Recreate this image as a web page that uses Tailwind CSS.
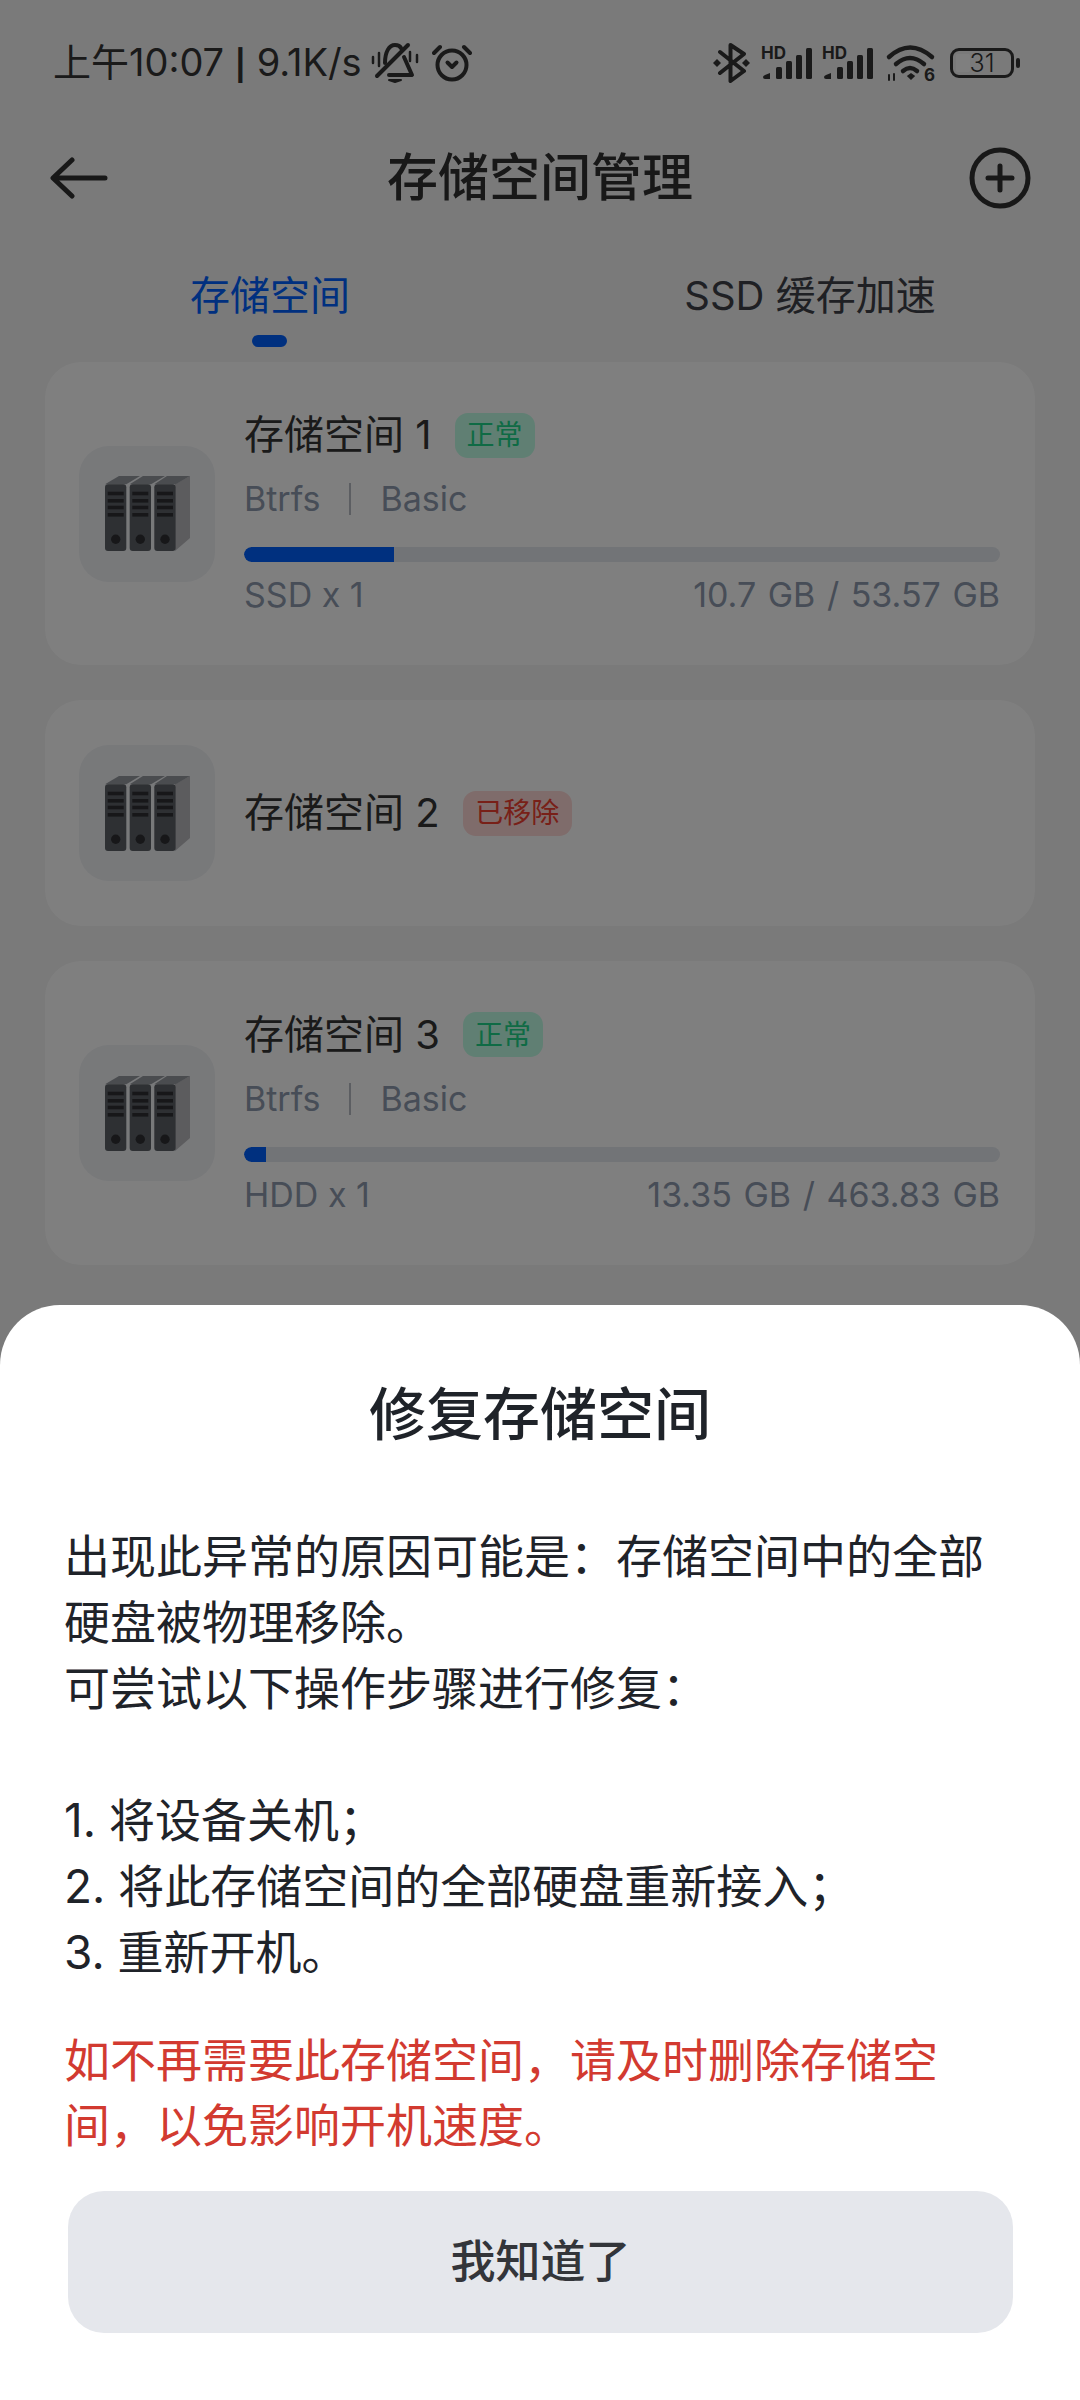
<!DOCTYPE html>
<html lang="zh-CN">
<head>
    <meta charset="UTF-8">
    <meta name="viewport" content="width=device-width, initial-scale=1.0">
    <title>存储空间管理</title>
    <script src="https://cdn.jsdelivr.net/npm/@tailwindcss/browser@4"></script>
</head>
<body class="relative w-[1080px] h-[2400px] overflow-hidden bg-[#f4f4f4] font-['Inter','Noto_Sans_CJK_SC',sans-serif] text-[#343434]">

    <!-- Status bar -->
    <div class="flex items-center h-[40px] mt-[43px] pl-[53px] pr-[60px]">
        <span class="text-[38px] leading-[40px] whitespace-nowrap">上午10:07 <span class="text-[30px] font-bold">|</span> 9.1K/s</span>
        <svg class="ml-[10px] overflow-visible" width="46" height="40" viewBox="0 0 46 40" fill="none" stroke="#343434" stroke-width="4" stroke-linecap="round" stroke-linejoin="round">
            <path d="M13 20c0-11 4-18 10-18 3 0 5 1 6 3M32 14l8 18H17"/>
            <path d="M36 2 5 33"/><path d="M17 37h12l-6 2z" stroke-width="2" fill="#343434"/>
            <path d="M1 14v6M7 10v13M38 9v9M45 12v7" stroke-width="2.500"/>
        </svg>
        <svg class="ml-[14px]" width="40" height="38" viewBox="0 0 40 38" fill="none" stroke="#343434" stroke-width="4" stroke-linecap="round" stroke-linejoin="round">
            <circle cx="20" cy="21" r="14.500"/><path d="M15.500 18.500 20 23l4.500-4.500"/><path d="M2 9l6-6M38 9l-6-6"/>
        </svg>
        <div class="ml-auto flex items-center">
            <svg width="37" height="40" viewBox="0 0 37 40" fill="none" stroke="#343434" stroke-width="4" stroke-linejoin="round" stroke-linecap="round">
                <path d="M7 9 31 28 17.500 38V2L31 11 7 30"/>
                <path d="M4 16l4 4-4 4-4-4zM33 16l4 4-4 4-4-4z" fill="#343434" stroke="none"/>
            </svg>
            <svg class="ml-[11px] overflow-visible" width="52" height="34" viewBox="0 0 52 34" fill="#343434">
                <text x="0" y="12.500" font-size="17" font-weight="700" font-family="Inter">HD</text>
                <path d="M9 27v6H4q-2 0-2-2 0-1 2-2z"/><rect x="15" y="21" width="6" height="12" rx="1.500"/><rect x="25" y="15" width="6" height="18" rx="1.500"/><rect x="35" y="9" width="6" height="24" rx="1.500"/><rect x="45" y="2" width="6" height="31" rx="1.500"/>
            </svg>
            <svg class="ml-[9px] overflow-visible" width="52" height="34" viewBox="0 0 52 34" fill="#343434">
                <text x="0" y="12.500" font-size="17" font-weight="700" font-family="Inter">HD</text>
                <path d="M9 27v6H4q-2 0-2-2 0-1 2-2z"/><rect x="15" y="21" width="6" height="12" rx="1.500"/><rect x="25" y="15" width="6" height="18" rx="1.500"/><rect x="35" y="9" width="6" height="24" rx="1.500"/><rect x="45" y="2" width="6" height="31" rx="1.500"/>
            </svg>
            <svg class="ml-[12px] overflow-visible" width="50" height="38" viewBox="0 0 50 38" fill="none" stroke="#343434" stroke-width="4.500" stroke-linecap="round">
                <path d="M3 13Q24-6 46 13"/><path d="M10 20Q24 8 38 20"/><path d="M17 27Q24 21 31 27"/>
                <path d="M22 32l3-2 3 2-3 3z" fill="#343434" stroke-width="1.500"/>
                <path d="M3 31v5M8 30v6" stroke-width="2"/>
                <text x="38" y="37" font-size="17" font-weight="700" font-family="Inter" fill="#343434" stroke="none">6</text>
            </svg>
            <div class="relative ml-[14px] w-[64px] h-[30px] rounded-[9px] border-[3px] border-[#343434] flex items-center justify-center">
                <div class="absolute left-[3px] top-[3px] bottom-[3px] w-[14px] rounded-[2px] bg-white"></div>
                <span class="relative text-[25px] leading-none font-light">31</span>
            </div>
            <div class="ml-[2px] w-[4px] h-[10px] rounded-full bg-[#343434]"></div>
        </div>
    </div>

    <!-- Header -->
    <div class="relative flex items-center justify-between h-[64px] mt-[63px] pl-[50px] pr-[49px]">
        <svg width="58" height="42" viewBox="0 0 58 42" fill="none" stroke="#303030" stroke-width="5" stroke-linecap="round" stroke-linejoin="round">
            <path d="M55 21H4M22 3 3 21l19 18"/>
        </svg>
        <h1 class="absolute left-0 right-0 text-center text-[51px] leading-[64px] font-medium text-[#303030]">存储空间管理</h1>
        <svg width="62" height="62" viewBox="0 0 62 62" fill="none" stroke="#303030" stroke-width="5" stroke-linecap="round">
            <circle cx="31" cy="31" r="28"/><path d="M31 19v24M19 31h24"/>
        </svg>
    </div>

    <!-- Tabs -->
    <div class="flex mt-[58px] h-[67px]">
        <div class="relative w-[540px] text-center text-[40px] leading-[56px] text-[#0060ff]">存储空间
            <div class="absolute left-[252px] top-[67px] w-[35px] h-[12px] rounded-full bg-[#0060ff]"></div>
        </div>
        <div class="w-[540px] text-center text-[40px] leading-[56px] text-[#3e4148]">SSD 缓存加速</div>
    </div>

    <!-- Cards -->
    <div class="flex flex-col gap-[35px] mx-[45px] mt-[27px]">
        <div class="flex items-center h-[303px] pl-[34px] pr-[35px] rounded-[36px] bg-white">
            <div class="flex-none flex items-center justify-center w-[136px] h-[136px] rounded-[30px] bg-[#f0f2f5]">
                <svg width="85" height="75" viewBox="0 0 85 75">
                    <path d="M70 8.300 85 0v62L70 75z" fill="#b8b8bc"/>
                    <g fill="#94989e"><path d="M0 8.300 14 0h21L21.300 8.300z"/><path d="M24.700 8.300 38 0h22L46 8.300z"/><path d="M49.300 8.300 62 0h23L70.700 8.300z"/></g>
                    <g fill="#5c6066"><rect x="0" y="8.300" width="21.300" height="66.700" rx="3"/><rect x="24.700" y="8.300" width="21.300" height="66.700" rx="3"/><rect x="49.300" y="8.300" width="21.300" height="66.700" rx="3"/></g>
                    <g fill="#2e2f33"><rect x="2.700" y="15.700" width="16" height="3.600"/><rect x="2.700" y="23" width="16" height="3.600"/><rect x="2.700" y="29.700" width="16" height="3.600"/><rect x="2.700" y="37" width="16" height="3.600"/><rect x="27.300" y="15.700" width="16" height="3.600"/><rect x="27.300" y="23" width="16" height="3.600"/><rect x="27.300" y="29.700" width="16" height="3.600"/><rect x="27.300" y="37" width="16" height="3.600"/><rect x="52" y="15.700" width="16" height="3.600"/><rect x="52" y="23" width="16" height="3.600"/><rect x="52" y="29.700" width="16" height="3.600"/><rect x="52" y="37" width="16" height="3.600"/><circle cx="10.700" cy="63.300" r="4.700"/><circle cx="35.300" cy="63.300" r="4.700"/><circle cx="60" cy="63.300" r="4.700"/></g>
                </svg>
            </div>
            <div class="flex-1 ml-[29px] pb-[2px]">
                <div class="flex items-center h-[46px]">
                    <span class="text-[40px] leading-[46px]">存储空间 1</span>
                    <span class="ml-[23px] flex items-center justify-center w-[80px] h-[45px] rounded-[13px] bg-[#c0ffe6] text-[28px] text-[#1ed68a]">正常</span>
                </div>
                <div class="flex items-center mt-[23px] h-[36px] text-[34px] leading-[36px] text-[#8e9aae]">
                    <span>Btrfs</span><span class="mx-[29px] w-[2px] h-[32px] bg-[#b8bcc4]"></span><span>Basic</span>
                </div>
                <div class="mt-[30px] h-[15px] rounded-full bg-[#e4e8ee] overflow-hidden"><div class="h-full w-[150px] rounded-l-full bg-[#0060ff]"></div></div>
                <div class="flex justify-between mt-[15px] h-[36px] text-[34px] leading-[36px] text-[#8e9aae]"><span>SSD x 1</span><span class="[word-spacing:2px]">10.7 GB / 53.57 GB</span></div>
            </div>
        </div>

        <div class="flex items-center h-[226px] pl-[34px] pr-[35px] rounded-[36px] bg-white">
            <div class="flex-none flex items-center justify-center w-[136px] h-[136px] rounded-[30px] bg-[#f0f2f5]">
                <svg width="85" height="75" viewBox="0 0 85 75">
                    <path d="M70 8.300 85 0v62L70 75z" fill="#b8b8bc"/>
                    <g fill="#94989e"><path d="M0 8.300 14 0h21L21.300 8.300z"/><path d="M24.700 8.300 38 0h22L46 8.300z"/><path d="M49.300 8.300 62 0h23L70.700 8.300z"/></g>
                    <g fill="#5c6066"><rect x="0" y="8.300" width="21.300" height="66.700" rx="3"/><rect x="24.700" y="8.300" width="21.300" height="66.700" rx="3"/><rect x="49.300" y="8.300" width="21.300" height="66.700" rx="3"/></g>
                    <g fill="#2e2f33"><rect x="2.700" y="15.700" width="16" height="3.600"/><rect x="2.700" y="23" width="16" height="3.600"/><rect x="2.700" y="29.700" width="16" height="3.600"/><rect x="2.700" y="37" width="16" height="3.600"/><rect x="27.300" y="15.700" width="16" height="3.600"/><rect x="27.300" y="23" width="16" height="3.600"/><rect x="27.300" y="29.700" width="16" height="3.600"/><rect x="27.300" y="37" width="16" height="3.600"/><rect x="52" y="15.700" width="16" height="3.600"/><rect x="52" y="23" width="16" height="3.600"/><rect x="52" y="29.700" width="16" height="3.600"/><rect x="52" y="37" width="16" height="3.600"/><circle cx="10.700" cy="63.300" r="4.700"/><circle cx="35.300" cy="63.300" r="4.700"/><circle cx="60" cy="63.300" r="4.700"/></g>
                </svg>
            </div>
            <div class="flex items-center ml-[29px] h-[46px]">
                <span class="text-[40px] leading-[46px]">存储空间 2</span>
                <span class="ml-[23px] flex items-center justify-center w-[109px] h-[45px] rounded-[13px] bg-[#ffd8d6] text-[28px] text-[#f04030]">已移除</span>
            </div>
        </div>

        <div class="flex items-center h-[304px] pl-[34px] pr-[35px] rounded-[36px] bg-white">
            <div class="flex-none flex items-center justify-center w-[136px] h-[136px] rounded-[30px] bg-[#f0f2f5]">
                <svg width="85" height="75" viewBox="0 0 85 75">
                    <path d="M70 8.300 85 0v62L70 75z" fill="#b8b8bc"/>
                    <g fill="#94989e"><path d="M0 8.300 14 0h21L21.300 8.300z"/><path d="M24.700 8.300 38 0h22L46 8.300z"/><path d="M49.300 8.300 62 0h23L70.700 8.300z"/></g>
                    <g fill="#5c6066"><rect x="0" y="8.300" width="21.300" height="66.700" rx="3"/><rect x="24.700" y="8.300" width="21.300" height="66.700" rx="3"/><rect x="49.300" y="8.300" width="21.300" height="66.700" rx="3"/></g>
                    <g fill="#2e2f33"><rect x="2.700" y="15.700" width="16" height="3.600"/><rect x="2.700" y="23" width="16" height="3.600"/><rect x="2.700" y="29.700" width="16" height="3.600"/><rect x="2.700" y="37" width="16" height="3.600"/><rect x="27.300" y="15.700" width="16" height="3.600"/><rect x="27.300" y="23" width="16" height="3.600"/><rect x="27.300" y="29.700" width="16" height="3.600"/><rect x="27.300" y="37" width="16" height="3.600"/><rect x="52" y="15.700" width="16" height="3.600"/><rect x="52" y="23" width="16" height="3.600"/><rect x="52" y="29.700" width="16" height="3.600"/><rect x="52" y="37" width="16" height="3.600"/><circle cx="10.700" cy="63.300" r="4.700"/><circle cx="35.300" cy="63.300" r="4.700"/><circle cx="60" cy="63.300" r="4.700"/></g>
                </svg>
            </div>
            <div class="flex-1 ml-[29px] pb-[2px]">
                <div class="flex items-center h-[46px]">
                    <span class="text-[40px] leading-[46px]">存储空间 3</span>
                    <span class="ml-[23px] flex items-center justify-center w-[80px] h-[45px] rounded-[13px] bg-[#c0ffe6] text-[28px] text-[#1ed68a]">正常</span>
                </div>
                <div class="flex items-center mt-[23px] h-[36px] text-[34px] leading-[36px] text-[#8e9aae]">
                    <span>Btrfs</span><span class="mx-[29px] w-[2px] h-[32px] bg-[#b8bcc4]"></span><span>Basic</span>
                </div>
                <div class="mt-[30px] h-[15px] rounded-full bg-[#e4e8ee] overflow-hidden"><div class="h-full w-[22px] rounded-l-full bg-[#0060ff]"></div></div>
                <div class="flex justify-between mt-[15px] h-[36px] text-[34px] leading-[36px] text-[#8e9aae]"><span>HDD x 1</span><span class="[word-spacing:2px]">13.35 GB / 463.83 GB</span></div>
            </div>
        </div>
    </div>

    <!-- Dim layer -->
    <div class="absolute inset-0 bg-black/50"></div>

    <!-- Bottom sheet -->
    <div class="absolute left-0 right-0 bottom-0 h-[1095px] rounded-t-[60px] bg-white pt-[74px]">
        <h2 class="text-center text-[57px] leading-[72px] font-medium text-[#1f2329]">修复存储空间</h2>
        <p class="mt-[72px] pl-[64px] text-[46px] leading-[66px] text-[#1f2329]">出现此异常的原因可能是：存储空间中的全部<br>硬盘被物理移除。<br>可尝试以下操作步骤进行修复：<br><br>1. 将设备关机；<br>2. 将此存储空间的全部硬盘重新接入；<br>3. 重新开机。</p>
        <p class="mt-[43px] pl-[64px] text-[46px] leading-[65px] text-[#d23a30]">如不再需要此存储空间，请及时删除存储空<br>间，以免影响开机速度。</p>
        <button class="block ml-[68px] mt-[33px] w-[945px] h-[142px] rounded-[36px] bg-[#e5e7ec] text-[45px] font-medium text-[#33353a]">我知道了</button>
    </div>
</body>
</html>
